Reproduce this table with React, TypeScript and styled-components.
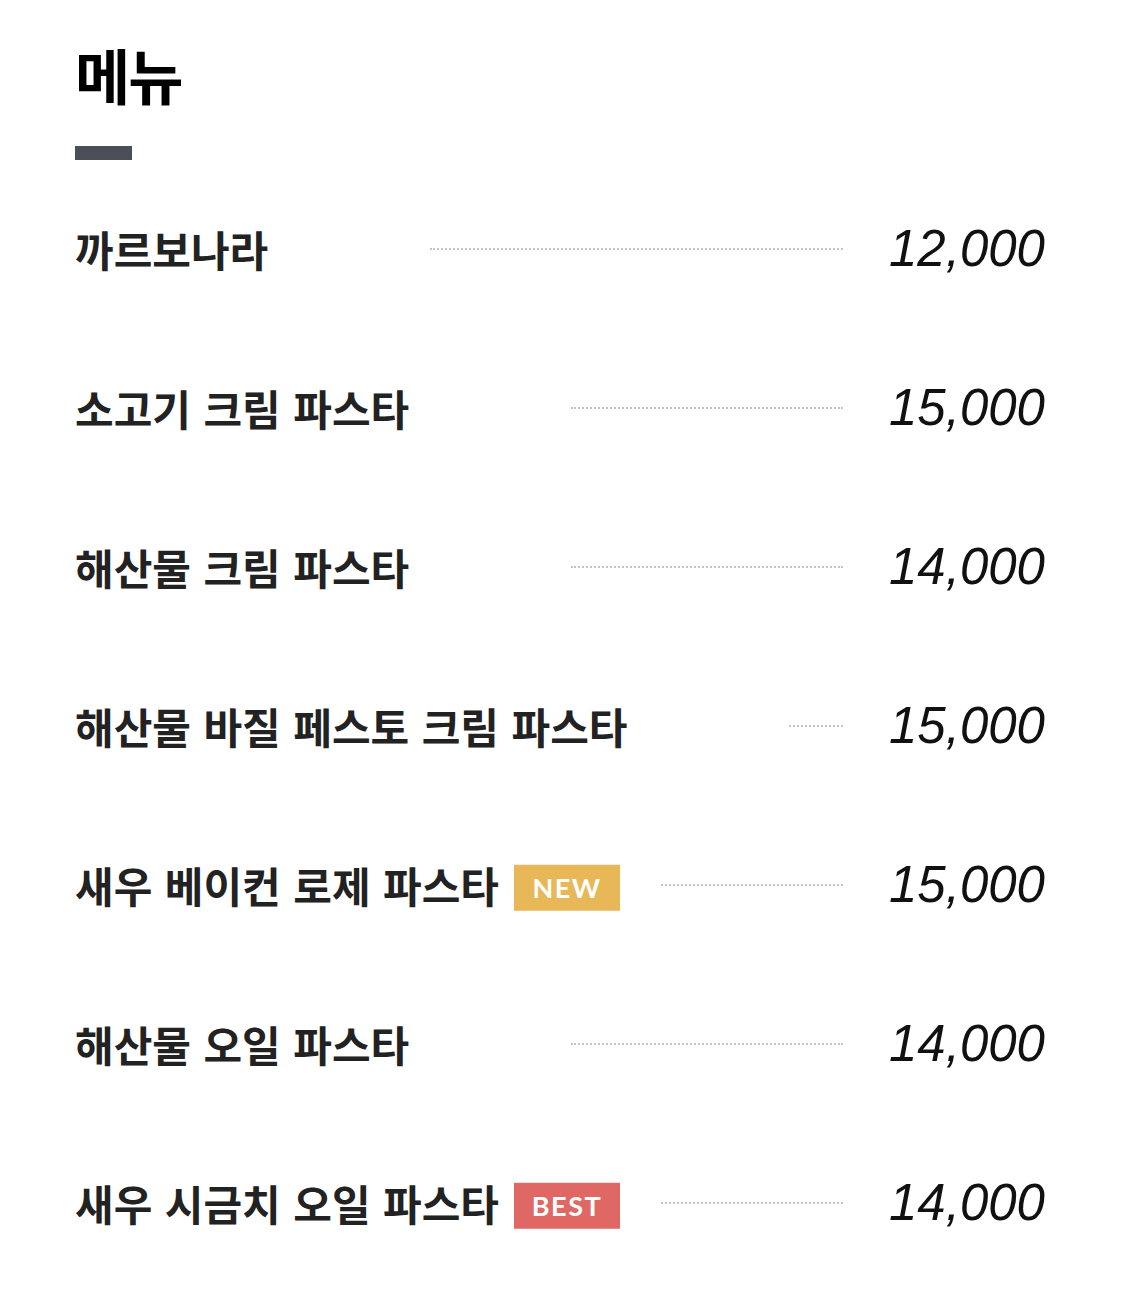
import React from "react";
import styled, { createGlobalStyle } from "styled-components";

const GlobalStyle = createGlobalStyle`
  body {
    margin: 0;
    background: #ffffff;
    font-family: "Noto Sans CJK KR", "Noto Sans", sans-serif;
  }
`;

type Badge = "NEW" | "BEST";

const menu: { name: string; price: string; badge?: Badge }[] = [
  { name: "까르보나라", price: "12,000" },
  { name: "소고기 크림 파스타", price: "15,000" },
  { name: "해산물 크림 파스타", price: "14,000" },
  { name: "해산물 바질 페스토 크림 파스타", price: "15,000" },
  { name: "새우 베이컨 로제 파스타", price: "15,000", badge: "NEW" },
  { name: "해산물 오일 파스타", price: "14,000" },
  { name: "새우 시금치 오일 파스타", price: "14,000", badge: "BEST" },
];

export default function App() {
  return (
    <>
      <GlobalStyle />
      <Page>
        <Title>메뉴</Title>
        <Underline />
        <List>
          {menu.map((item) => (
            <Row key={item.name}>
              <Name>
                {item.name}
                {item.badge && <Tag $kind={item.badge}>{item.badge}</Tag>}
              </Name>
              <Dots />
              <Price>{item.price}</Price>
            </Row>
          ))}
        </List>
      </Page>
    </>
  );
}

const Page = styled.div`
  width: 970px;
  padding: 38px 0 0 75px;
`;

const Title = styled.h1`
  margin: 0;
  font-size: 60px;
  line-height: 72px;
  font-weight: 700;
  letter-spacing: -2px;
  color: #000;
`;

const Underline = styled.div`
  width: 57px;
  height: 14px;
  margin-top: 36px;
  background-color: #4b4e56;
`;

const List = styled.ul`
  list-style: none;
  margin: 9px 0 0;
  padding: 0;
`;

const Row = styled.li`
  display: flex;
  align-items: center;
  height: 159px;
`;

const Name = styled.span`
  position: relative;
  margin-right: 162px;
  font-size: 42px;
  font-weight: 700;
  word-spacing: 3px;
  color: #222;
  white-space: nowrap;
`;

const Tag = styled.span<{ $kind: Badge }>`
  position: absolute;
  left: calc(100% + 15px);
  top: 50%;
  transform: translateY(-44%);
  width: 106px;
  height: 46px;
  display: flex;
  align-items: center;
  justify-content: center;
  font-family: "Lato", "Open Sans", sans-serif;
  font-size: 27px;
  font-weight: 700;
  letter-spacing: 1.5px;
  word-spacing: 0;
  color: #fff;
  background-color: ${({ $kind }) => ($kind === "NEW" ? "#e8b858" : "#e06864")};
`;

const Dots = styled.span`
  flex: 1;
  border-top: 2px dotted #c4c4c4;
`;

const Price = styled.span`
  width: 202px;
  text-align: right;
  font-family: "Liberation Sans", Arial, sans-serif;
  font-style: italic;
  font-size: 51px;
  color: #111;
`;
